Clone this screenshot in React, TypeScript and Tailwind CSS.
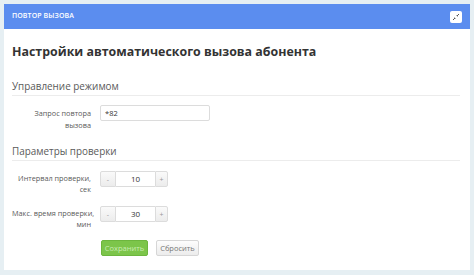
import { useState } from "react";

function Stepper({ value, onChange }: { value: number; onChange: (v: number) => void }) {
  return (
    <div className="flex h-[16px]">
      <button
        onClick={() => onChange(value - 1)}
        className="w-[16px] h-[16px] border border-[#dcdcdc] bg-gradient-to-b from-[#fafafa] to-[#ececec] text-[7px] text-[#999] leading-none rounded-l-[2px]"
      >
        -
      </button>
      <div className="w-[39px] h-[16px] border-y border-[#dcdcdc] bg-white text-[8px] text-[#333] flex items-center justify-center">
        {value}
      </div>
      <button
        onClick={() => onChange(value + 1)}
        className="w-[13px] h-[16px] border border-[#dcdcdc] bg-gradient-to-b from-[#fafafa] to-[#ececec] text-[7px] text-[#999] leading-none rounded-r-[2px]"
      >
        +
      </button>
    </div>
  );
}

export default function App() {
  const [interval, setInterval] = useState(10);
  const [maxTime, setMaxTime] = useState(30);
  const [code, setCode] = useState("*82");

  return (
    <div className="w-[474px] h-[275px] bg-[#e6eff3] pt-[4px] pl-[4px] font-['Open_Sans',sans-serif]">
      <div className="w-[466px] h-[266px] bg-white">
        {/* Header bar */}
        <div className="h-[25px] bg-[#5b8def] flex items-center justify-between pl-[8px] pr-[8px]">
          <span className="text-white text-[7px] font-semibold tracking-[0.1px]">ПОВТОР ВЫЗОВА</span>
          <button className="w-[12px] h-[12px] bg-white rounded-[2px] flex items-center justify-center">
            <svg width="8" height="8" viewBox="0 0 8 8">
              <path d="M1 7 L3 5 M7 1 L5 3" stroke="#555" strokeWidth="1" />
              <path d="M2 5 L3 5 L3 6 M6 3 L5 3 L5 2" stroke="#555" strokeWidth="0.8" fill="none" />
            </svg>
          </button>
        </div>

        <div className="px-[8px]">
          <h1 className="text-[12.4px] font-bold text-[#333] leading-none mt-[17px]">
            Настройки автоматического вызова абонента
          </h1>

          <div className="mt-[21px] border-b border-[#ececec] pb-[2px] mr-[2px]">
            <h2 className="text-[9.9px] text-[#5a5a5a] leading-[14px]">Управление режимом</h2>
          </div>

          <div className="flex mt-[9px] h-[28px]">
            <label className="w-[79px] whitespace-nowrap text-right text-[7.3px] leading-[12px] text-[#5a5a5a] pt-[2px]">
              Запрос повтора
              <br />
              вызова
            </label>
            <input
              value={code}
              onChange={(e) => setCode(e.target.value)}
              className="ml-[9px] w-[110px] h-[16px] border border-[#dcdcdc] rounded-[2px] px-[4px] text-[7.5px] text-[#333] outline-none"
            />
          </div>

          <div className="mt-[11px] border-b border-[#ececec] pb-[2px] mr-[2px]">
            <h2 className="text-[9.9px] text-[#5a5a5a] leading-[14px]">Параметры проверки</h2>
          </div>

          <div className="flex mt-[10px] h-[25px]">
            <label className="w-[79px] whitespace-nowrap text-right text-[7.3px] leading-[11px] text-[#5a5a5a] pt-[1.5px]">
              Интервал проверки,
              <br />
              сек
            </label>
            <div className="ml-[9px]">
              <Stepper value={interval} onChange={setInterval} />
            </div>
          </div>

          <div className="flex mt-[10px] h-[25px]">
            <label className="w-[79px] whitespace-nowrap text-right text-[7.3px] leading-[11px] text-[#5a5a5a] pt-[1.5px]">
              Макс. время проверки,
              <br />
              мин
            </label>
            <div className="ml-[9px]">
              <Stepper value={maxTime} onChange={setMaxTime} />
            </div>
          </div>

          <div className="flex gap-[8px] ml-[89px] mt-[9px]">
            <button className="w-[47px] h-[16px] bg-[#7cc54a] border border-[#6db63e] rounded-[2px] text-[7.5px] text-[#c9ecb2]">
              Сохранить
            </button>
            <button className="w-[43px] h-[16px] bg-gradient-to-b from-[#fdfdfd] to-[#ececec] border border-[#d6d6d6] rounded-[2px] text-[7.5px] text-[#777]">
              Сбросить
            </button>
          </div>
        </div>
      </div>
    </div>
  );
}
